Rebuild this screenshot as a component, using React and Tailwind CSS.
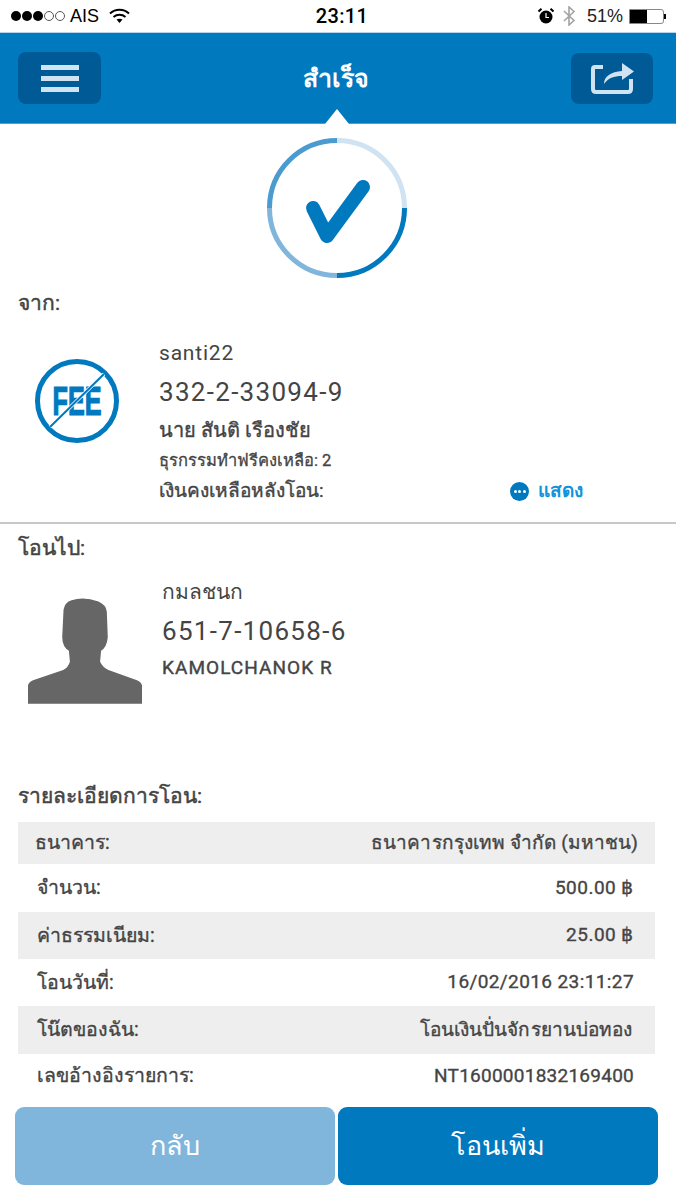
import React from 'react';

const rows = [
  { label: 'ธนาคาร:', value: 'ธนาคารกรุงเทพ จำกัด (มหาชน)', h: 'h-[42px]', shade: true, pl: 'pl-[17px]', pr: 'pr-[17px]', track: 'tracking-[0.1px]' },
  { label: 'จำนวน:', value: '500.00 ฿', h: 'h-[48px]', pl: 'pl-[19px]', pr: 'pr-[21px]', track: 'tracking-[0.5px]' },
  { label: 'ค่าธรรมเนียม:', value: '25.00 ฿', h: 'h-[47px]', shade: true, pl: 'pl-[19px]', pr: 'pr-[21px]', track: 'tracking-[0.5px]' },
  { label: 'โอนวันที่:', value: '16/02/2016 23:11:27', h: 'h-[47px]', pl: 'pl-[19px]', pr: 'pr-[21px]', track: 'tracking-[0.4px]' },
  { label: 'โน๊ตของฉัน:', value: 'โอนเงินปั่นจักรยานบ่อทอง', h: 'h-[48px]', shade: true, pl: 'pl-[19px]', pr: 'pr-[23px]', track: 'tracking-[0.05px]' },
  { label: 'เลขอ้างอิงรายการ:', value: 'NT1600001832169400', h: 'h-[44px]', pl: 'pl-[19px]', pr: 'pr-[21px]', track: 'tracking-[0.25px]' },
];

function StatusBar() {
  return (
    <div className="h-[33px] bg-white grid grid-cols-3 items-center font-['Liberation_Sans',sans-serif] text-black border-b border-[#b5d6ea]">
      <div className="flex items-center pl-[11px]">
        <div className="flex gap-[1px]">
          <span className="w-[10px] h-[10px] rounded-full bg-black"></span>
          <span className="w-[10px] h-[10px] rounded-full bg-black"></span>
          <span className="w-[10px] h-[10px] rounded-full bg-black"></span>
          <span className="w-[10px] h-[10px] rounded-full border border-[#555]"></span>
          <span className="w-[10px] h-[10px] rounded-full border border-[#555]"></span>
        </div>
        <span className="text-[18px] ml-[5px]">AIS</span>
        <svg className="ml-[10px]" width="21" height="16" viewBox="0 0 21 16" fill="none" stroke="#000" strokeWidth="2">
          <path d="M1 5.5 C6.5 0.5 14.5 0.5 20 5.5" />
          <path d="M4.5 9 C8 6 13 6 16.5 9" />
          <path d="M10.5 15 L7.5 11.6 C9.2 10.4 11.8 10.4 13.5 11.6 Z" fill="#000" stroke="none" />
        </svg>
      </div>
      <div className="text-center pl-[8px] text-[20px] font-medium leading-none tracking-[0.3px] font-['Roboto',sans-serif]">23:11</div>
      <div className="flex items-center justify-end pr-[10px]">
        <svg width="16" height="16" viewBox="0 0 16 16">
          <circle cx="8" cy="9" r="6.5" fill="#000" />
          <path d="M8 5 V9.5 H11" stroke="#fff" strokeWidth="1.2" fill="none" />
          <path d="M0.5 3.5 L3.5 0.8 M15.5 3.5 L12.5 0.8" stroke="#000" strokeWidth="2" />
        </svg>
        <svg className="ml-[9px]" width="13" height="20" viewBox="0 0 13 20" fill="none" stroke="#a3a3a3" strokeWidth="1.6">
          <path d="M1 5 L11 14.5 L6 19 V1 L11 5.5 L1 15" />
        </svg>
        <span className="text-[18px] ml-[11px] text-[#222]">51%</span>
        <div className="ml-[6px] w-[35px] h-[15px] border border-[#888] rounded-r-[3px] flex">
          <div className="w-[17px] bg-black"></div>
        </div>
        <span className="w-[2px] h-[5px] bg-black"></span>
      </div>
    </div>
  );
}

function Header() {
  return (
    <div className="relative h-[91px] bg-[#0079bf] flex items-center justify-between pl-[18px] pr-[23px] border-b border-[#4c9fd2]">
      <div className="w-[83px] h-[52px] rounded-[8px] bg-[#005a96] flex flex-col items-center justify-center gap-[6px]">
        <span className="w-[38px] h-[5px] bg-[#cfe3f2]"></span>
        <span className="w-[38px] h-[5px] bg-[#cfe3f2]"></span>
        <span className="w-[38px] h-[5px] bg-[#cfe3f2]"></span>
      </div>
      <div className="text-white text-[25px] font-bold leading-none">สำเร็จ</div>
      <div className="w-[82px] h-[51px] rounded-[8px] bg-[#005a96] flex items-center justify-center">
        <svg width="43" height="32" viewBox="0 0 43 32" fill="none">
          <path d="M12 5 H4 Q2 5 2 7 V27 Q2 30 5 30 H37 Q40 30 40 27 V17" stroke="#cfe3f2" strokeWidth="4" />
          <path d="M13 22 C13 14 20 10 31 9 V1 L43 9.5 L31 18 V14 C23 14 17 16 13 22 Z" fill="#cfe3f2" />
        </svg>
      </div>
      <svg className="absolute left-[325px] bottom-[-1px]" width="24" height="15" viewBox="0 0 24 15">
        <path d="M12 0 L24 15 H0 Z" fill="#fff" />
      </svg>
    </div>
  );
}

function SuccessRing() {
  return (
    <div className="flex justify-center pt-[14px] pr-[2px]">
      <svg width="140" height="140" viewBox="0 0 140 140" fill="none">
        <g strokeWidth="5">
          <path d="M70 2.5 A67.5 67.5 0 0 1 137.5 70" stroke="#cfe3f2" />
          <path d="M137.5 70 A67.5 67.5 0 0 1 70 137.5" stroke="#0079bf" />
          <path d="M70 137.5 A67.5 67.5 0 0 1 2.5 70" stroke="#80b6dc" />
          <path d="M2.5 70 A67.5 67.5 0 0 1 70 2.5" stroke="#4c9bd0" />
        </g>
        <path d="M46 70 L60 98 L96 49" stroke="#0079bf" strokeWidth="14" strokeLinecap="round" strokeLinejoin="round" />
      </svg>
    </div>
  );
}

function FeeIcon() {
  return (
    <svg width="86" height="86" viewBox="0 0 86 86" fill="none">
      <circle cx="43" cy="43" r="39.5" stroke="#0079bf" strokeWidth="5" />
      <text transform="translate(43 57) scale(0.63 1)" textAnchor="middle" fontFamily="Liberation Sans, sans-serif" fontWeight="700" fontSize="40" fill="#0079bf" stroke="#0079bf" strokeWidth="1.2">FEE</text>
      <path d="M16 69 L70 16" stroke="#fff" strokeWidth="3.5" />
      <path d="M16 69 L70 16" stroke="#0079bf" strokeWidth="2" />
    </svg>
  );
}

function PersonIcon() {
  return (
    <svg width="114" height="106" viewBox="85 205 340 316">
      <path d="M85 520 V465 Q88 455 100 450 L190 420 Q205 412 210 395 L207 362 Q188 352 187 322 L191 240 Q195 218 215 212 Q250 200 295 215 Q318 225 320 245 L323 322 Q320 352 303 362 L300 395 Q308 412 325 420 L410 450 Q422 455 425 465 V520 Z" fill="#666" />
    </svg>
  );
}

export default function App() {
  return (
    <div className="w-[676px] h-[1201px] bg-white overflow-hidden font-['Roboto','Noto_Sans',sans-serif] text-[#444]">
      <StatusBar />
      <Header />
      <SuccessRing />

      <div className="pl-[18px] mt-[13px] h-[24px] text-[21px] [-webkit-text-stroke:0.5px] leading-[24px]">จาก:</div>

      <div className="flex mt-[26px] h-[182px]">
        <div className="pl-[34px] pt-[17px] w-[159px] shrink-0"><FeeIcon /></div>
        <div className="flex-1">
          <div className="text-[21px] leading-[24px] tracking-[0.8px]">santi22</div>
          <div className="text-[26px] leading-[30px] mt-[12px] tracking-[1.3px]">332-2-33094-9</div>
          <div className="text-[20px] [-webkit-text-stroke:0.4px] leading-[24px] mt-[11px]">นาย สันติ เรืองชัย</div>
          <div className="text-[16.5px] [-webkit-text-stroke:0.3px] leading-[20px] mt-[9px]">ธุรกรรมทำฟรีคงเหลือ: 2</div>
          <div className="flex items-center mt-[8px] h-[24px]">
            <span className="text-[19px] [-webkit-text-stroke:0.4px] w-[351px]">เงินคงเหลือหลังโอน:</span>
            <span className="w-[19px] h-[19px] rounded-full bg-[#0079bf] flex items-center justify-center gap-[1.5px]">
              <i className="w-[3px] h-[3px] rounded-full bg-white"></i>
              <i className="w-[3px] h-[3px] rounded-full bg-white"></i>
              <i className="w-[3px] h-[3px] rounded-full bg-white"></i>
            </span>
            <span className="ml-[9px] text-[19px] font-semibold text-[#1194d9]">แสดง</span>
          </div>
        </div>
      </div>
      <div className="h-[2px] bg-[#c8c8c8] mt-[-1px]"></div>

      <div className="pl-[18px] mt-[12px] h-[24px] text-[21px] [-webkit-text-stroke:0.5px] leading-[24px]">โอนไป:</div>

      <div className="flex mt-[20px] h-[156px]">
        <div className="pl-[28px] pt-[18px] w-[162px] shrink-0"><PersonIcon /></div>
        <div className="flex-1">
          <div className="text-[21px] leading-[24px]">กมลชนก</div>
          <div className="text-[26px] leading-[30px] mt-[12px] tracking-[1.3px]">651-7-10658-6</div>
          <div className="text-[19px] [-webkit-text-stroke:0.4px] leading-[24px] mt-[10px] tracking-[1.05px]">KAMOLCHANOK R</div>
        </div>
      </div>

      <div className="pl-[18px] mt-[48px] h-[24px] text-[21px] [-webkit-text-stroke:0.5px] leading-[24px]">รายละเอียดการโอน:</div>

      <div className="mx-[18px] mt-[14px] w-[637px]">
        {rows.map((r) => (
          <div key={r.label} className={`flex items-center justify-between [-webkit-text-stroke:0.35px] ${r.h} ${r.pl} ${r.pr} ${r.shade ? 'bg-[#eeeeee]' : ''}`}>
            <span className="text-[19.5px]">{r.label}</span>
            <span className={`text-[19px] ${r.track}`}>{r.value}</span>
          </div>
        ))}
      </div>

      <div className="flex gap-[3px] pl-[15px] mt-[9px]">
        <div className="w-[320px] h-[78px] rounded-[9px] bg-[#80b6dc] text-white text-[27px] flex items-center justify-center">กลับ</div>
        <div className="w-[320px] h-[78px] rounded-[9px] bg-[#0079bf] text-white text-[27px] flex items-center justify-center">โอนเพิ่ม</div>
      </div>
    </div>
  );
}
